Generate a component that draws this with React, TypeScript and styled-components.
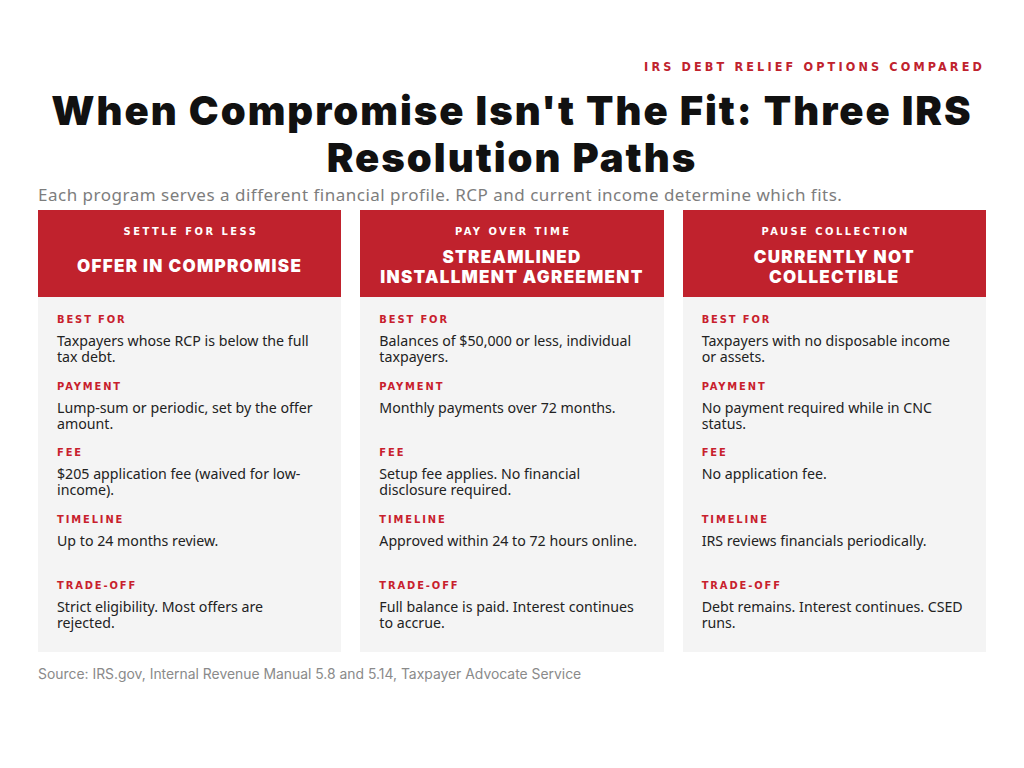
import React from "react";
import styled, { createGlobalStyle } from "styled-components";

const GlobalStyle = createGlobalStyle`
  * { box-sizing: border-box; }
  body {
    margin: 0;
    background: #ffffff;
    font-family: "Noto Sans", "Open Sans", sans-serif;
  }
`;

const RED = "#c0222d";
const CONDENSED = `"DejaVu Sans Condensed", "DejaVu Sans", sans-serif`;

const Page = styled.div`
  width: 1024px;
  height: 768px;
  padding: 58px 38px 0 38px;
  display: flex;
  flex-direction: column;
`;

const Eyebrow = styled.div`
  align-self: flex-end;
  margin-right: 1px;
  font-family: ${CONDENSED};
  font-stretch: semi-condensed;
  font-weight: 700;
  font-size: 12.5px;
  line-height: 18px;
  letter-spacing: 3.15px;
  color: ${RED};
`;

const Title = styled.h1`
  margin: 11px 0 0 0;
  text-align: center;
  font-family: "Inter", "Roboto", sans-serif;
  font-weight: 900;
  font-size: 40px;
  line-height: 47px;
  letter-spacing: 2px;
  color: #111111;
`;

const Subtitle = styled.p`
  margin: 4px 0 0 0;
  font-family: "Noto Sans", sans-serif;
  font-size: 17px;
  line-height: 20px;
  letter-spacing: 0.5px;
  color: #7d7d7d;
`;

const Cards = styled.div`
  margin-top: 5px;
  display: grid;
  grid-template-columns: repeat(3, 1fr);
  column-gap: 19px;
`;

const Card = styled.div`
  display: flex;
  flex-direction: column;
`;

const Header = styled.div`
  height: 87px;
  background: ${RED};
  color: #ffffff;
  display: flex;
  flex-direction: column;
  align-items: center;
  padding-top: 15px;
  text-align: center;
`;

const Kicker = styled.div`
  font-family: ${CONDENSED};
  font-stretch: semi-condensed;
  font-weight: 700;
  font-size: 11px;
  line-height: 14px;
  letter-spacing: 2.5px;
  margin-right: -2.5px;
`;

const CardTitle = styled.div<{ $lines: number }>`
  flex: 1;
  display: flex;
  align-items: center;
  justify-content: center;
  padding-bottom: ${(p) => (p.$lines > 1 ? 2 : 4)}px;
  font-family: "Inter", "Roboto", sans-serif;
  font-weight: 900;
  font-size: 17px;
  line-height: 20px;
  letter-spacing: 1.3px;
  text-transform: uppercase;
`;

const Body = styled.div`
  background: #f4f4f4;
  padding: 16px 19px 6px 19px;
  display: grid;
  grid-auto-rows: 66.6px;
`;

const Section = styled.div`
  display: flex;
  flex-direction: column;
`;

const Label = styled.div`
  font-family: ${CONDENSED};
  font-stretch: semi-condensed;
  font-weight: 700;
  font-size: 11px;
  line-height: 14px;
  letter-spacing: 1.9px;
  color: #c8202c;
`;

const Value = styled.div`
  margin-top: 6px;
  font-family: "Noto Sans", sans-serif;
  font-size: 14.2px;
  line-height: 16px;
  color: #222222;
`;

const Source = styled.div`
  margin-top: 13px;
  font-family: "Inter", sans-serif;
  font-size: 13.9px;
  line-height: 18px;
  color: #8a8a8a;
`;

type Option = {
  kicker: string;
  title: string[];
  rows: [string, string][];
};

const options: Option[] = [
  {
    kicker: "SETTLE FOR LESS",
    title: ["Offer in Compromise"],
    rows: [
      ["BEST FOR", "Taxpayers whose RCP is below the full tax debt."],
      ["PAYMENT", "Lump-sum or periodic, set by the offer amount."],
      ["FEE", "$205 application fee (waived for low-income)."],
      ["TIMELINE", "Up to 24 months review."],
      ["TRADE-OFF", "Strict eligibility. Most offers are rejected."],
    ],
  },
  {
    kicker: "PAY OVER TIME",
    title: ["Streamlined", "Installment Agreement"],
    rows: [
      ["BEST FOR", "Balances of $50,000 or less, individual taxpayers."],
      ["PAYMENT", "Monthly payments over 72 months."],
      ["FEE", "Setup fee applies. No financial disclosure required."],
      ["TIMELINE", "Approved within 24 to 72 hours online."],
      ["TRADE-OFF", "Full balance is paid. Interest continues to accrue."],
    ],
  },
  {
    kicker: "PAUSE COLLECTION",
    title: ["Currently Not", "Collectible"],
    rows: [
      ["BEST FOR", "Taxpayers with no disposable income or assets."],
      ["PAYMENT", "No payment required while in CNC status."],
      ["FEE", "No application fee."],
      ["TIMELINE", "IRS reviews financials periodically."],
      ["TRADE-OFF", "Debt remains. Interest continues. CSED runs."],
    ],
  },
];

export default function App() {
  return (
    <>
      <GlobalStyle />
      <Page>
        <Eyebrow>IRS DEBT RELIEF OPTIONS COMPARED</Eyebrow>
        <Title>
          When Compromise Isn't The Fit: Three IRS
          <br />
          Resolution Paths
        </Title>
        <Subtitle>
          Each program serves a different financial profile. RCP and current
          income determine which fits.
        </Subtitle>
        <Cards>
          {options.map((o) => (
            <Card key={o.kicker}>
              <Header>
                <Kicker>{o.kicker}</Kicker>
                <CardTitle $lines={o.title.length}>
                  <span>
                    {o.title.map((t, i) => (
                      <React.Fragment key={t}>
                        {i > 0 && <br />}
                        {t}
                      </React.Fragment>
                    ))}
                  </span>
                </CardTitle>
              </Header>
              <Body>
                {o.rows.map(([label, value]) => (
                  <Section key={label}>
                    <Label>{label}</Label>
                    <Value>{value}</Value>
                  </Section>
                ))}
              </Body>
            </Card>
          ))}
        </Cards>
        <Source>
          Source: IRS.gov, Internal Revenue Manual 5.8 and 5.14, Taxpayer
          Advocate Service
        </Source>
      </Page>
    </>
  );
}
